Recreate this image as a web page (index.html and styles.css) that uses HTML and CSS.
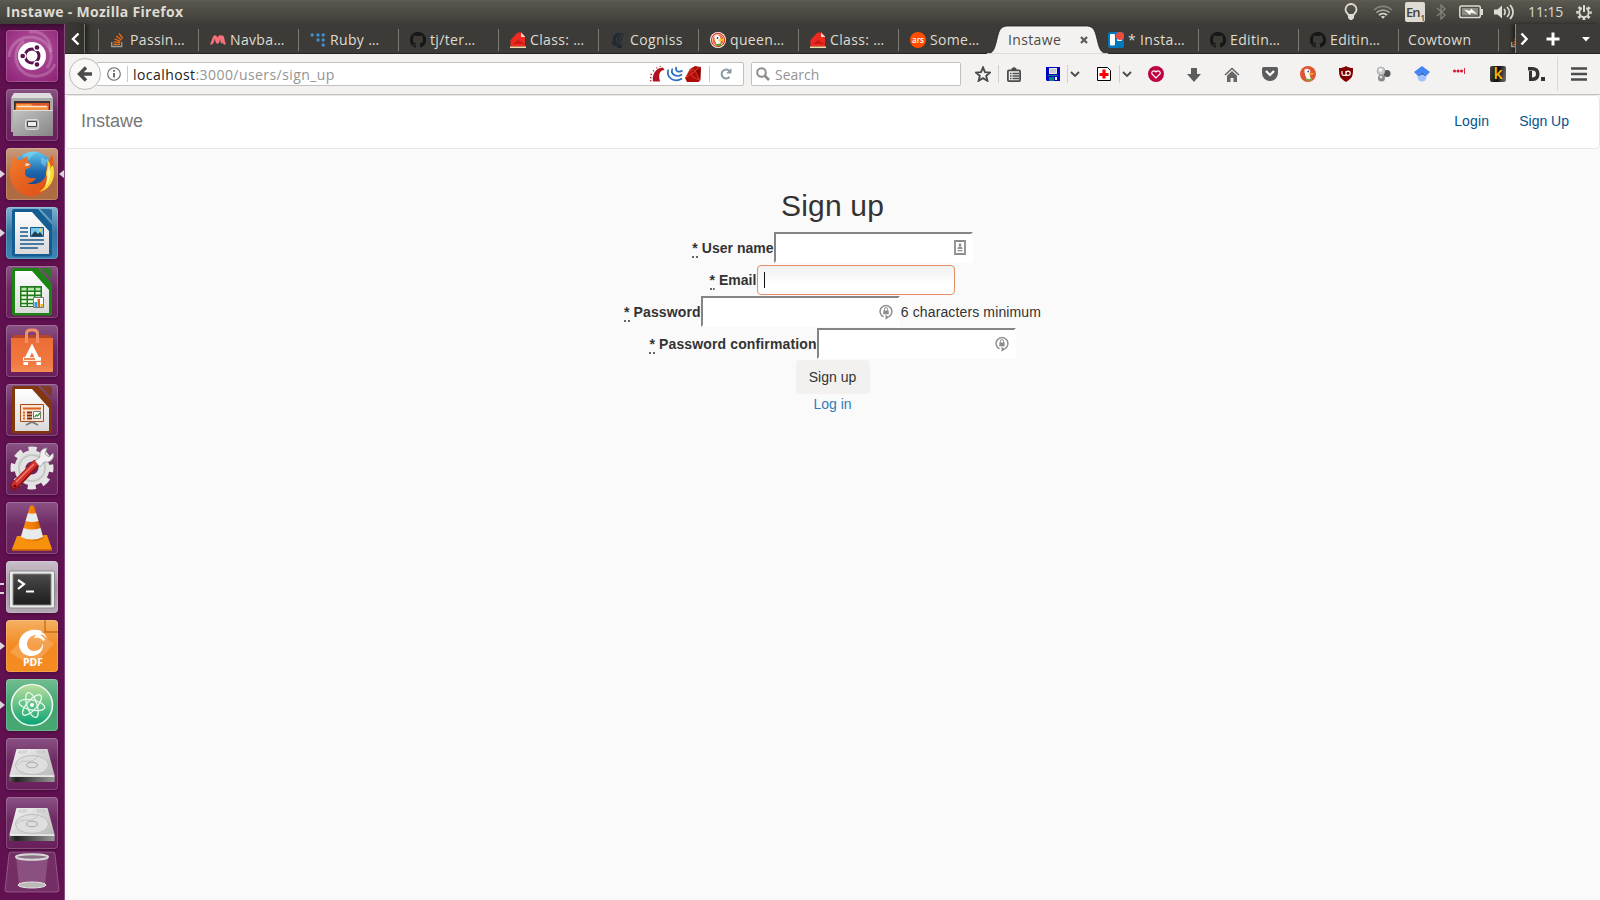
FILE: index.html
```html
<!DOCTYPE html>
<html lang="en">
<head>
<meta charset="utf-8">
<title>Instawe</title>
<link rel="stylesheet" href="styles.css">
</head>
<body>
<svg class="defs" width="0" height="0" aria-hidden="true">
  <defs>
    <linearGradient id="metal" x1="0" y1="0" x2="1" y2="1"><stop offset="0" stop-color="#f4f4f4"/><stop offset="1" stop-color="#b4b4b4"/></linearGradient>
    <linearGradient id="cabinet" x1="0" y1="0" x2="1" y2="1"><stop offset="0" stop-color="#c4c4c4"/><stop offset="1" stop-color="#858585"/></linearGradient>
    <linearGradient id="paper" x1="0" y1="0" x2="0" y2="1"><stop offset="0" stop-color="#fff"/><stop offset="1" stop-color="#d9d9d9"/></linearGradient>
    <linearGradient id="bag" x1="0" y1="0" x2="0" y2="1"><stop offset="0" stop-color="#ec6c34"/><stop offset=".75" stop-color="#f07a41"/><stop offset="1" stop-color="#f58a55"/></linearGradient>
    <linearGradient id="fox" x1="0" y1="0" x2="1" y2="1"><stop offset="0" stop-color="#f2802c"/><stop offset=".5" stop-color="#e4601f"/><stop offset=".8" stop-color="#e2551a"/><stop offset="1" stop-color="#f6a821"/></linearGradient>
    <linearGradient id="globe" x1="0" y1="0" x2="0" y2="1"><stop offset="0" stop-color="#62c6ee"/><stop offset=".5" stop-color="#1c66ae"/><stop offset="1" stop-color="#123e80"/></linearGradient>
    <linearGradient id="term" x1="0" y1="0" x2="0" y2="1"><stop offset="0" stop-color="#4a4a4a"/><stop offset="1" stop-color="#1d1d1d"/></linearGradient>
    <linearGradient id="cone" x1="0" y1="0" x2="1" y2="0"><stop offset="0" stop-color="#f79318"/><stop offset=".5" stop-color="#f57f06"/><stop offset="1" stop-color="#d25a00"/></linearGradient>
    <linearGradient id="atom" x1="0" y1="0" x2="0" y2="1"><stop offset="0" stop-color="#b9de9b"/><stop offset="1" stop-color="#08a374"/></linearGradient>
    <linearGradient id="slab" x1="0" y1="0" x2="1" y2="0"><stop offset="0" stop-color="#555"/><stop offset=".15" stop-color="#222"/><stop offset="1" stop-color="#999"/></linearGradient>
    <symbol id="i-github" viewBox="0 0 16 16"><path fill="#161616" fill-rule="evenodd" d="M8 0a8 8 0 0 0-2.600 15.600c.4.1.6-.2.6-.4v-1.500c-2.200.5-2.700-1-2.700-1-.4-.9-.9-1.100-.9-1.100-.7-.5.1-.5.1-.5.8.1 1.200.8 1.200.8.7 1.200 1.900.9 2.300.7.1-.5.3-.9.5-1.100-1.800-.2-3.600-.9-3.600-4 0-.9.3-1.600.8-2.100-.1-.2-.4-1 .1-2.100 0 0 .7-.2 2.200.8a7.600 7.600 0 0 1 4 0c1.500-1 2.200-.8 2.200-.8.4 1.100.2 1.900.1 2.100.5.6.8 1.300.8 2.100 0 3.100-1.900 3.800-3.700 4 .3.3.6.8.6 1.500v2.200c0 .2.100.5.600.4A8 8 0 0 0 8 0z"/></symbol>
    <symbol id="i-ruby" viewBox="0 0 16 16"><path fill="#ee2a20" d="M.5 8 7.500.5h4L15 5v9.500H.5z"/><path fill="#c91b16" d="m3 12 5-4 7 4z"/><path fill="#fbd5cf" d="M11 .5 15.500 5H11z"/><path fill="#f3d9a5" d="M0 14.500h16V16H0z"/></symbol>
    <symbol id="i-duck" viewBox="0 0 16 16"><circle cx="8" cy="8" r="8" fill="#de5833"/><path fill="#fff" d="M4.500 3.500C6 2 10 2.500 10.500 5.500L9.500 8l1.500 6H7C6 11 4 7 4.500 3.500z"/><path fill="#fdc70a" d="m9 7.500 4.500-.5c1 .5-.5 1.500-4 2z"/><circle cx="8.300" cy="5.500" r=".9" fill="#2a4f8f"/><path fill="#62bb47" d="m6 12.500 4 .5 2-1v3l-2.500-.8L7 15z"/></symbol>
    <symbol id="i-so" viewBox="0 0 16 16"><path d="M1.700 10v4.500h10V10" fill="none" stroke="#9a9a98" stroke-width="1.300"/><path d="M3.500 12.300h6.500M3.700 9.800l6.400.9M4.500 7l6 2.300M6.300 4l5.200 4M9 1.300l3.700 5.200" stroke="#f06f10" stroke-width="1.300"/></symbol>
    <symbol id="i-chev" viewBox="0 0 10 6"><path d="m1 1 4 4 4-4" fill="none" stroke="#4b4b4b" stroke-width="1.800"/></symbol>
    <symbol id="i-lock" viewBox="0 0 14 16"><path d="M4.500 12.800A5.900 5.900 0 1 1 9.500 12.800" fill="none" stroke="#8d8d8d" stroke-width="1.500"/><path d="m6.500 10.800 3.700 2.400-3.700 2.600z" fill="#8d8d8d"/><path d="M4.300 6.500h5.400v3.800H4.300z" fill="#8d8d8d"/><path d="M5.400 7V5.200a1.600 1.600 0 0 1 3.200 0V7" fill="none" stroke="#8d8d8d"/></symbol>
    <symbol id="i-disk" viewBox="0 0 52 52"><path d="M10.500 11h31L48.500 37l-.5 7H4l-.5-7z" fill="url(#metal)"/><path d="M3.500 38.500h45V44h-45z" fill="url(#slab)"/><path d="M4 38.200h44.300" stroke="#fff" stroke-width="1.200"/><ellipse cx="26" cy="27" rx="16.500" ry="9.500" fill="#dedede" stroke="#bdbdbd"/><path d="M11 27c7-9 13 2 21-9" stroke="#c4c4c4" fill="none"/><ellipse cx="26" cy="27" rx="5.500" ry="2.800" fill="#ddd" stroke="#aaa"/><path d="M13 13h8l-2 2h-6zM31 13h8v2h-7z" fill="none" stroke="#bbb" stroke-width=".7"/></symbol>
    <symbol id="i-doc" viewBox="0 0 52 52"><path d="M8 2h24l14 16v29a2.500 2.500 0 0 1-2.500 2.500h-35A2.500 2.500 0 0 1 6 47V4a2 2 0 0 1 2-2z" fill="currentColor"/><path d="M34 2h10a2 2 0 0 1 2 2v10z" fill="currentColor" opacity=".8"/><path d="M9 5h17l17 19v23H9z" fill="url(#paper)"/></symbol>
  </defs>
</svg>

<header class="panel">
  <div class="panel-title">Instawe - Mozilla Firefox</div>
  <div class="indicators">
    <svg class="ind-bulb" width="16" height="18" viewBox="0 0 16 18"><path d="M5.500 12C5 10 2.500 9.500 2.500 6.500a5.500 5.500 0 0 1 11 0c0 3-2.500 3.500-3 5.500z" fill="none" stroke="#dfdbd2" stroke-width="1.800"/><path d="M5 12.500h6V15l-2 2H7l-2-2z" fill="#dfdbd2"/></svg>
    <svg class="ind-wifi" width="20" height="14" viewBox="0 0 20 14"><g fill="none" stroke-width="1.700"><path d="M1 5a13 13 0 0 1 18 0" stroke="#85827b"/><path d="M3.500 7.700a9.500 9.500 0 0 1 13 0" stroke="#a5a29b"/><path d="M6 10.200a6 6 0 0 1 8 0" stroke="#dfdbd2"/></g><path d="m7.800 11.600 2.200 2.200 2.200-2.200a4 4 0 0 0-4.400 0z" fill="#dfdbd2"/></svg>
    <div class="ind-lang">En<sub>1</sub></div>
    <svg class="ind-bt" width="10" height="16" viewBox="0 0 10 16"><path d="m1 4 8 7-4 4V1l4 4-8 7" fill="none" stroke="#85827b" stroke-width="1.300"/></svg>
    <svg class="ind-bat" width="24" height="14" viewBox="0 0 24 14"><rect x=".8" y="1" width="20.500" height="11.500" rx="1.800" fill="none" stroke="#dfdbd2" stroke-width="1.500"/><path d="M22 4h2v6h-2z" fill="#dfdbd2"/><path d="M3 3h16v7.500H3z" fill="#8f8b84"/><path d="m5 4.500 6 1.500L12 3.500l6 5.500-6-1.500-1 2.500z" fill="#fff"/></svg>
    <svg class="ind-vol" width="20" height="16" viewBox="0 0 20 16"><path d="M0 5.500h3.500L8 1.500v13l-4.500-4H0z" fill="#dfdbd2"/><path d="M10 5c1.500 1.500 1.500 4.500 0 6M13 3c3 3 3 7 0 10M16 1c4 4 4 10 0 14" fill="none" stroke="#dfdbd2" stroke-width="1.700"/></svg>
    <div class="ind-time">11:15</div>
    <svg class="ind-gear" width="16" height="16" viewBox="0 0 16 16"><circle cx="8" cy="8.500" r="4.700" fill="none" stroke="#dfdbd2" stroke-width="1.900"/><circle cx="8" cy="8.500" r="6.600" fill="none" stroke="#dfdbd2" stroke-width="2.400" stroke-dasharray="2.600 2.584" stroke-dashoffset="1.300"/><path d="M6 0h4v8H6z" fill="#4d4b46"/><path d="M8 1v7" stroke="#dfdbd2" stroke-width="2"/></svg>
  </div>
</header>

<div class="desktop">
  <aside class="launcher">
    <div class="tile dash"><svg viewBox="0 0 52 52"><g fill="none" stroke="#fff" stroke-opacity=".2" stroke-width="3"><path d="M3 27C4 12 18 3 34 9c12 6 14 20 7 29"/><path d="M49 34c-5 13-25 17-35 5-7-9-5-22 4-28"/><path d="M23 2c14-2 22 8 22 20"/></g><circle cx="26" cy="26" r="14" fill="#fff"/><circle cx="26" cy="26" r="7" fill="none" stroke="#5e1150" stroke-width="3"/><g stroke="#fff" stroke-width="1.300" fill="#5e1150"><circle cx="16.700" cy="26" r="3"/><circle cx="31" cy="17.500" r="3"/><circle cx="31" cy="34.500" r="3"/></g></svg></div>
    <div class="tile"><svg viewBox="0 0 52 52"><path d="M8 4h36l3 6v33H5V10z" fill="#ababab"/><path d="M8 4h36l3 5H5z" fill="#ddd"/><path d="M8 12h36v10H8z" fill="#3d3231"/><path d="M10 14h33v8H9z" fill="#d9572a"/><path d="M10 15h15l2 2h15v5H10z" fill="#f4913f"/><path d="M11 17.500h30" stroke="#ffe3c7" stroke-width="1.500"/><path d="M7 21h40v26H7z" fill="url(#cabinet)"/><path d="M7 21.500h40" stroke="#ddd"/><rect x="19.500" y="30.500" width="13" height="10" rx="2" fill="#b9b9b9" stroke="#ddd"/><path d="M21.500 32.500h9v5h-9z" fill="#eee" stroke="#444"/></svg></div>
    <div class="tile firefox running focused"><svg viewBox="0 0 52 52"><circle cx="27" cy="24" r="20.500" fill="url(#globe)"/><path d="M17 7c5-3 10-4 14-3-3 3-7 5-8 8l-5 1zM35 9l6 3-2 7-4-4z" fill="#8fe0f6" opacity=".45"/><path d="M8 8c2 2.500 4 4.500 7 4 2-2 4-3 7-3.500-.5 3 0 5 1.500 6.500l1.500 2c0 3-4 3.500-6 5 .5 2-.5 4 1 6 3 3 6 1.500 10 2-2 4-6 5-9 5.500 9 2 17-1 19-9 1-5 0-8 1-11 3-4 4-6 5-9 3 9 2 19-1 26C41 43 34 48 25.500 48 13 48 4 38 4 26 4 19 5 13 8 8z" fill="url(#fox)"/><path d="M41 10.500c3 5 4 7 3.500 9.500L47 17c2 8 1 15-3 20-3 4-7 6-11 7 6-4 8-8 8-14 0-2-1-3-1-5 2-5 2-9 1-14.500z" fill="#fbd932"/><path d="m42 17 1.500 7 1-3c0 8-1 13-5 17 2-6 2-14 2.500-21z" fill="#fff4a0"/><path d="m20 15 4 1c-1 2-3 2-5 2z" fill="#fbd9c4"/></svg></div>
    <div class="tile writer running"><svg class="c-writer" viewBox="0 0 52 52"><use href="#i-doc"/><path d="M14 21h8M14 25h8M14 29h8M14 33h24M14 37h24M14 41h18" stroke="#155a8c" stroke-width="1.700"/><path d="M24.500 20.500h13v9h-13z" fill="#79c8ed" stroke="#155a8c"/><path d="m25 29 4-5 3 3 2-2 3 4z" fill="#23404e"/><circle cx="34.500" cy="23" r="1.500" fill="#f4cf3e"/></svg></div>
    <div class="tile"><svg class="c-calc" viewBox="0 0 52 52"><use href="#i-doc"/><path d="M14 20h22v21H14z" fill="#207a1c"/><path d="M15.500 21.800h5v2.600h-5zm6.500 0h6v2.600h-6zm7.500 0h5v2.600h-5z" fill="#b8e5a8"/><path d="M15.500 26h5v2.500h-5zm6.500 0h6v2.500h-6zm7.500 0h5v2.500h-5zm-14 4.200h5v2.500h-5zm6.500 0h6v2.500h-6zm7.500 0h5v2.500h-5zm-14 4.100h5v2.500h-5zm6.500 0h6v2.500h-6zm-6.500 4h5v1.700h-5zm6.500 0h6v1.700h-6z" fill="#eafbe2"/><path d="M27.500 31.500h10v10h-10z" fill="#fff" stroke="#777"/><path d="M28.500 36h2.500v5h-2.500z" fill="#269be0"/><path d="M31.500 33H34v8h-2.500z" fill="#d9661f"/><path d="M34.500 38H37v3h-2.500z" fill="#f0b91a"/></svg></div>
    <div class="tile"><svg viewBox="0 0 52 52"><path d="M5 14 8 10h36l3 4z" fill="#b4472a"/><path d="M5 13h42v34H5z" fill="url(#bag)"/><path d="M20.500 18V9q0-4 4-4h3q4 0 4 4v9" fill="none" stroke="#f0906b" stroke-width="3"/><path d="m20 35 6-12 6 12" fill="none" stroke="#fff" stroke-width="4"/><path d="M17 34h18" stroke="#fff" stroke-width="3.600"/><path d="M18 34h11" stroke="#ed6b2c" stroke-width="1.600"/><path d="M17.500 38.500h4.500M30.500 38.500H35" stroke="#fff" stroke-width="3"/></svg></div>
    <div class="tile"><svg class="c-impress" viewBox="0 0 52 52"><use href="#i-doc"/><path d="M14.500 20.500h23v17h-23z" fill="#fbe4d6" stroke="#a14d19"/><path d="M17 24.500h18" stroke="#d9661f" stroke-width="2"/><path d="M17 28.500h2M17 31.500h2M17 34.500h2" stroke="#d9661f" stroke-width="2"/><path d="M21 28.500h5M21 31.500h5M21 34.500h5" stroke="#7d2f0c" stroke-width="2"/><path d="M27.500 27.500h7v7h-7z" fill="#fff" stroke="#777"/><path d="m28.500 33 2-2 1 1 2.500-3" stroke="#2e9d34" stroke-width="1.300" fill="none"/><path d="m20 41 6-3 6 3" fill="none" stroke="#777" stroke-width="1.600"/></svg></div>
    <div class="tile"><svg viewBox="0 0 52 52"><circle cx="26" cy="25" r="18.500" fill="none" stroke="#e5e5e5" stroke-width="6" stroke-dasharray="8 6.530" stroke-dashoffset="4"/><circle cx="26" cy="25" r="12" fill="none" stroke="#e2e2e2" stroke-width="11"/><circle cx="26" cy="25" r="13" fill="none" stroke="#c6c6c6" stroke-width="2"/><path d="m8.500 43 21-22" stroke="#8f1414" stroke-width="8" stroke-linecap="round"/><path d="m8.500 42 21-22" stroke="#d5322d" stroke-width="5.500" stroke-linecap="round"/><path d="m10 39 18-18" stroke="#f0837b" stroke-width="1.200"/><circle cx="9" cy="43" r="1.500" fill="#601"/><path d="m29 18 5-4c-1-5 2-9 7-9l-2 6 4 3 4-4c2 6-3 10-9 9l-4 5z" fill="#f1f1f1" stroke="#999" stroke-width=".8"/></svg></div>
    <div class="tile"><svg viewBox="0 0 52 52"><path d="m11 34 30-1 5 14H6z" fill="#f8920d"/><path d="M6 47h40v1.800H6z" fill="#d76a00"/><path d="M24 4q2-1.500 4 0l9.500 32q-11 7-23 0z" fill="url(#cone)"/><path d="m22 11-2.500 8q6.500 2 13 0L30 11q-4 1.500-8 0zM17.500 26l-2.500 9q11 5 22 0l-2.500-9q-8.500 3-17 0z" fill="#e6ebec"/></svg></div>
    <div class="tile terminal running double"><svg viewBox="0 0 52 52"><rect x="3.500" y="10" width="45" height="37" rx="1.500" fill="#ebebeb" stroke="#8a8a8a"/><path d="M7 13h38v31H7z" fill="url(#term)" stroke="#888"/><path d="m12 19 6 4-6 5" fill="none" stroke="#fff" stroke-width="2.200"/><path d="M20 30.500h8" stroke="#fff" stroke-width="2"/></svg></div>
    <div class="tile pdf running"><svg viewBox="0 0 52 52"><path d="M26 8 48 24 26 47 4 32z" fill="#fff" opacity=".18"/><path d="M39 0v12h13" fill="none" stroke="#c86d15" stroke-width="1.300"/><path d="M36 11C26 7 13 12 13 24c0 7 5 12 12 12 8 0 13-6 12-13-1 4-3 8-9 8-4 0-7-3-7-7 0-5 4-9 9-9l-2 3c4-1 8 0 9 3l2-1c-1-3-4-5-6-5 5-1 6 2 8 4-1-4-3-6-6-7z" fill="#fff"/><text x="27" y="46" class="pdf-label">PDF</text></svg></div>
    <div class="tile atom running"><svg viewBox="0 0 52 52"><circle cx="26" cy="26" r="20.500" fill="url(#atom)" stroke="#e9f4ec" stroke-width="1.700"/><g fill="none" stroke="#e9f9ee" stroke-width="1.300"><ellipse cx="26" cy="26" rx="13" ry="5" transform="rotate(12 26 26)"/><ellipse cx="26" cy="26" rx="13" ry="5" transform="rotate(72 26 26)"/><ellipse cx="26" cy="26" rx="13" ry="5" transform="rotate(132 26 26)"/></g><circle cx="26" cy="26" r="2" fill="#fff"/></svg></div>
    <div class="tile"><svg viewBox="0 0 52 52"><use href="#i-disk"/></svg></div>
    <div class="tile"><svg viewBox="0 0 52 52"><use href="#i-disk"/></svg></div>
    <svg class="trash" width="56" height="42" viewBox="0 0 56 42"><path d="M7 1h42q2 0 2 2l4 36q0 2-2 2H3q-2 0-2-2L5 3q0-2 2-2z" fill="#fff" fill-opacity=".12" stroke="#fff" stroke-opacity=".25"/><path d="M12 6h32l-3 28H15z" fill="#fff" fill-opacity=".17"/><ellipse cx="28" cy="34" rx="14" ry="3" fill="#bcb9b6" stroke="#e6e6e6"/><ellipse cx="28" cy="6" rx="16" ry="2.700" fill="#8b7286" stroke="#d8d8d8" stroke-width="2"/></svg>
  </aside>

  <main class="window">
    <nav class="tabs">
      <div class="scroll-left"><svg width="9" height="14" viewBox="0 0 9 14"><path d="M7.500 1.500 2 7l5.500 5.500" fill="none" stroke="#fff" stroke-width="2.400"/></svg></div>
      <div class="tab"><svg class="fav" viewBox="0 0 16 16"><use href="#i-so"/></svg><span>Passin…</span></div>
      <div class="tab"><svg class="fav" viewBox="0 0 16 16"><path d="M.5 11.500c3 .5 2.500-7 4.500-7s1 6 2.500 6S8 4.500 10 4.500s1 6 2.300 6M11.500 4.500c3 0 .5 7 4 7" fill="none" stroke="#f7727c" stroke-width="2.600"/></svg><span>Navba…</span></div>
      <div class="tab"><svg class="fav" viewBox="0 0 16 16"><g fill="#3f8fd0"><circle cx="2.200" cy="3" r="1.700"/><circle cx="8" cy="3" r="1.700"/><circle cx="13.200" cy="3" r="1.700"/><circle cx="8" cy="8" r="1.700"/><circle cx="13.200" cy="8" r="1.700"/><circle cx="13.200" cy="13" r="1.700"/></g></svg><span>Ruby …</span></div>
      <div class="tab"><svg class="fav"><use href="#i-github"/></svg><span>tj/ter…</span></div>
      <div class="tab"><svg class="fav"><use href="#i-ruby"/></svg><span>Class: …</span></div>
      <div class="tab"><svg class="fav" viewBox="0 0 16 16"><path d="M14 2C7-1 2 3 3 8l-2 3 2 .5V14l4-.5V16h5l-1-5" fill="#1f2a33"/><path d="M14 4a4.500 4.500 0 1 0 0 7M13 6a2 2 0 1 0 0 3" fill="none" stroke="#3e3d39" stroke-width="1.200"/></svg><span>Cogniss</span></div>
      <div class="tab"><svg class="fav" viewBox="0 0 16 16"><circle cx="8" cy="8" r="8" fill="#fff"/><circle cx="8" cy="8" r="7.200" fill="#de3b12"/><circle cx="8" cy="8" r="6" fill="#fff"/><circle cx="8" cy="8" r="5.500" fill="#e8643a"/><path fill="#fff" d="M4.500 4C6 2 10 3 10.500 6v7H7C6 11 4 7 4.500 4z"/><path fill="#fdc70a" d="m9 7 4.500 0-1 2-4 .5z"/><circle cx="7.500" cy="6" r=".9" fill="#234"/><path fill="#48a535" d="m6 12 5-.5v2.500H7z"/></svg><span>queen…</span></div>
      <div class="tab"><svg class="fav"><use href="#i-ruby"/></svg><span>Class: …</span></div>
      <div class="tab"><i class="ars">ars</i><span>Some…</span></div>
      <div class="tab active"><svg class="tab-shape" width="128" height="30" viewBox="0 0 128 30"><path d="M1 30c7 0 9-3 11-11l2-8C16 4 18 2 25 2h76c7 0 9 2 11 9l2 8c2 8 4 11 13 11z" fill="#f4f2f0" stroke="#23221f" stroke-width=".8"/><path d="M3 29.300h121v1H3z" fill="#f4f2f0"/></svg><span>Instawe</span><svg class="close" width="8" height="8" viewBox="0 0 8 8"><path d="m1 1 6 6M7 1 1 7" stroke="#5c5c5a" stroke-width="2.300"/></svg></div>
      <div class="tab after"><svg class="fav" viewBox="0 0 16 16"><rect width="16" height="16" rx="2.500" fill="#0079bf"/><rect x="2" y="2" width="5" height="11.500" rx="1" fill="#fff"/><rect x="9" y="2" width="5" height="7" rx="1" fill="#fff"/><circle cx="12" cy="4" r="4" fill="#eb4d3d"/></svg><span>* Insta…</span></div>
      <div class="tab"><svg class="fav"><use href="#i-github"/></svg><span>Editin…</span></div>
      <div class="tab"><svg class="fav"><use href="#i-github"/></svg><span>Editin…</span></div>
      <div class="tab bare"><span>Cowtown</span></div>
      <div class="tab cut"><svg class="fav" viewBox="0 0 16 16"><use href="#i-so"/></svg></div>
      <div class="tab-tools">
        <svg width="8" height="14" viewBox="0 0 8 14"><path d="M1.500 1.500 6.500 7l-5 5.500" fill="none" stroke="#fff" stroke-width="2.400"/></svg>
        <svg class="plus" width="14" height="14" viewBox="0 0 14 14"><path d="M7 .5v13M.5 7h13" stroke="#fff" stroke-width="3"/></svg>
        <svg width="8" height="5" viewBox="0 0 8 5"><path d="M0 0h8L4 4.500z" fill="#fff"/></svg>
      </div>
    </nav>

    <div class="toolbar">
      <div class="back"><svg width="16" height="16" viewBox="0 0 16 16"><path d="M9 1.500 2.500 8 9 14.500M3 8h12" fill="none" stroke="#4b4b4b" stroke-width="3.400"/></svg></div>
      <div class="urlbar">
        <svg width="14" height="14" viewBox="0 0 14 14"><circle cx="7" cy="7" r="6.300" fill="none" stroke="#666" stroke-width="1.100"/><path d="M7 6v4.500M7 3v1.800" stroke="#555" stroke-width="1.700"/></svg>
        <div class="url"><b>localhost</b>:3000/users/sign_up</div>
        <div class="url-icons">
          <svg width="16" height="16" viewBox="0 0 16 16"><path d="M4 15.500C3 8 6.500 2 14 1.500l1.500 2.500C11 4 9 8 11 15.500z" fill="#b11020"/><path d="m1 15 1.500-.5M1 11.500l1.500.3M1.500 8l1.500.7M4 4.300l1 1M7.500 1.500l.7 1M11 0l.3 1" stroke="#b11020" stroke-width="1.200"/></svg>
          <svg width="16" height="16" viewBox="0 0 16 16"><g fill="none" stroke="#2a6fc0" stroke-width="1.700"><path d="M1.500 3.500c-3 8 6 14 13.500 9"/><path d="M5.500 2.500c-2.500 6 4 9.500 9.500 6"/><path d="M9.500 1c-2 4 2 6 6 3.500"/></g></svg>
          <svg width="16" height="16" viewBox="0 0 16 16"><path d="m5 3 5-3 6 1-.5 13-2 2H2l-2-4z" fill="#b10d08"/><path d="m5 3.500 5.500 1L15 1M5 3.500l-4 8L10.500 5l4 9-7-3z" fill="none" stroke="#e04a3d" stroke-width=".7"/><path d="m11 5 4.500-3-.5 11z" fill="#7d0703"/></svg>
        </div>
        <svg class="reload" width="12" height="12" viewBox="0 0 12 12"><path d="M9.500 9A4.500 4.500 0 1 1 9.500 3" fill="none" stroke="#8c9aa5" stroke-width="2"/><path d="M11.500 0v5.500H6z" fill="#8c9aa5"/></svg>
      </div>
      <div class="search"><svg width="14" height="14" viewBox="0 0 14 14"><circle cx="5.500" cy="5.500" r="4.300" fill="none" stroke="#8c8c8a" stroke-width="2"/><path d="m8.500 8.500 4.500 4.500" stroke="#8c8c8a" stroke-width="2.600"/></svg><span>Search</span></div>
      <div class="cell star"><svg width="16" height="16" viewBox="0 0 16 16"><path d="m8 1.500 2 4.600 5 .5-3.800 3.300 1.200 4.900L8 12.200l-4.400 2.600 1.200-4.900L1 6.600l5-.5z" fill="none" stroke="#4b4b4b" stroke-width="1.900"/></svg></div>
      <div class="cell list"><svg width="14" height="15" viewBox="0 0 14 15"><path d="M4.500 1.500 7 0l2.500 1.500V4h-5z" fill="#4b4b4b"/><rect x=".9" y="3.400" width="12.200" height="10.700" rx="1" fill="#f4f2f0" stroke="#4b4b4b" stroke-width="1.800"/><path d="M3 6.500h1.500M3 9h1.500M3 11.500h1.500M5.500 6.500H12M5.500 9H12M5.500 11.500H12" stroke="#4b4b4b" stroke-width="1.300"/></svg></div>
      <div class="cell save"><svg width="14" height="14" viewBox="0 0 14 14"><path d="M0 0h14v14H1l-1-1z" fill="#0000c0"/><path d="M3 1h8v6H3z" fill="#e9e9e9"/><path d="M4 3h6M4 5h6" stroke="#aaa"/><path d="M2 8h10v1H2zM3 10h5v4H3z" fill="#078080"/><path d="M9 10h2v3H9z" fill="#fff"/></svg></div>
      <div class="drop"><svg width="10" height="6"><use href="#i-chev"/></svg></div>
      <div class="cell cross"><svg width="14" height="14" viewBox="0 0 14 14"><path d="M.5.500h10l3 3v10H.5z" fill="#fff" stroke="#000"/><path d="M7 2.500v9M2.500 7.500h9" stroke="#f00" stroke-width="3.200"/></svg></div>
      <div class="drop"><svg width="10" height="6"><use href="#i-chev"/></svg></div>
      <div class="addons">
        <div><svg width="16" height="16" viewBox="0 0 16 16"><circle cx="8" cy="8" r="8" fill="#be0243"/><path d="M8 12 4.200 8.200C2.500 5.500 6.200 3.500 8 6c1.800-2.500 5.500-.5 3.800 2.200z" fill="none" stroke="#fff" stroke-width="1.200"/></svg></div>
        <div><svg width="14" height="15" viewBox="0 0 14 15"><path d="M4 1h6v6h4l-7 8-7-8h4z" fill="#5d5d5d"/></svg></div>
        <div><svg width="16" height="15" viewBox="0 0 16 15"><path d="m1 8 7-6.500L15 8" fill="none" stroke="#666" stroke-width="1.600"/><path d="m3 8.700 5-4.600 5 4.600V15H9.500v-4h-3v4H3z" fill="#666"/></svg></div>
        <div><svg width="16" height="14" viewBox="0 0 16 14"><path d="M1.500 0h13Q16 0 16 1.500V6A8 8 0 0 1 0 6V1.500Q0 0 1.500 0z" fill="#5d5d5d"/><path d="m4 4 4 4 4-4" fill="none" stroke="#fff" stroke-width="2.200"/></svg></div>
        <div><svg width="16" height="16"><use href="#i-duck"/></svg></div>
        <div><svg width="16" height="16" viewBox="0 0 16 16"><path d="M8 0c2 1.500 4.500 2 7 2 0 7 0 10-7 14C1 12 1 9 1 2c2.500 0 5-.5 7-2z" fill="#800000"/><path d="M4 5v2.500Q4 9.300 5.500 9.300H8V5M8 7.200a2.100 2.100 0 1 0 4.200 0a2.100 2.100 0 1 0-4.200 0" fill="none" stroke="#fff" stroke-width="1.200"/></svg></div>
        <div><svg width="16" height="16" viewBox="0 0 16 16"><circle cx="11" cy="7.500" r="3.500" fill="#555"/><circle cx="5" cy="5" r="4" fill="#c8c8c8" stroke="#999" stroke-width=".6"/><circle cx="5.500" cy="12" r="3.500" fill="#888"/><circle cx="4.500" cy="4" r="1.800" fill="#f6f6f6"/><circle cx="5" cy="11" r="1.500" fill="#ddd"/></svg></div>
        <div><svg width="16" height="16" viewBox="0 0 16 16"><path d="m8 0 8 6-4 4H4L0 6z" fill="#4285f4"/><circle cx="8" cy="11" r="4.500" fill="#a0c3ff"/><path d="m3.500 9 1.500 1c2-2 4-2 6 0l1.500-1L8 6z" fill="#356ac3"/></svg></div>
        <div class="lp"><svg width="12" height="6" viewBox="0 0 12 6"><circle cx="1.500" cy="3" r="1.500" fill="#d9102f"/><circle cx="5" cy="3" r="1.500" fill="#d9102f"/><circle cx="8.500" cy="3" r="1.500" fill="#d9102f"/><path d="M11.500 0v6" stroke="#d9102f" stroke-width=".9"/></svg></div>
        <div><span class="k">k</span></div>
        <div><svg width="17" height="14" viewBox="0 0 17 14"><path d="M0 0h5q6.500.5 6.500 7T5 14H1V4h3v6.500Q8 10.500 8 7T5 3.500H0z" fill="#333"/><path d="M13 10h4v4h-4z" fill="#333"/></svg></div>
      </div>
      <div class="menu"><svg width="16" height="14" viewBox="0 0 16 14"><path d="M0 1.500h16M0 7h16M0 12.500h16" stroke="#4b4b4b" stroke-width="2.600"/></svg></div>
    </div>

    <section class="page">
      <nav class="navbar"><a class="brand">Instawe</a><a class="login">Login</a><a>Sign Up</a></nav>
      <h2>Sign up</h2>
      <form class="form">
        <div class="row"><label><abbr title="required">*</abbr> User name</label><div class="field"><svg width="12" height="15" viewBox="0 0 12 15"><path d="M1 1h10v13H1z" fill="none" stroke="#8d8d8d" stroke-width="1.800"/><circle cx="6" cy="5" r="1.400" fill="#8d8d8d"/><path d="M3.500 9q0-2.500 2.500-2.500T8.500 9zM3.500 10h5v1.300h-5z" fill="#8d8d8d"/></svg></div></div>
        <div class="row"><label><abbr title="required">*</abbr> Email</label><div class="field focus"><i class="caret"></i></div></div>
        <div class="row"><label class="loose"><abbr title="required">*</abbr> Password</label><div class="field"><svg width="14" height="16"><use href="#i-lock"/></svg></div><span class="hint">6 characters minimum</span></div>
        <div class="row"><label class="loose"><abbr title="required">*</abbr> Password confirmation</label><div class="field"><svg width="14" height="16"><use href="#i-lock"/></svg></div></div>
        <button type="button">Sign up</button>
        <a class="log-in">Log in</a>
      </form>
    </section>
  </main>
</div>
</body>
</html>
```
FILE: styles.css
```css
* { box-sizing: border-box; }
body { margin: 0; width: 1600px; height: 900px; overflow: hidden; display: flex; flex-direction: column; font-family: "Open Sans", "Noto Sans", sans-serif; font-size: 14px; }
svg { display: block; flex: none; }
.defs { position: absolute; }

/* Top panel */
.panel { height: 24px; flex: none; display: flex; justify-content: space-between; align-items: center; padding: 0 8px 0 6px; color: #dfdbd2; background: linear-gradient(#5f5d50, #57554c 10%, #3e3d39); }
.panel-title { font-weight: 700; font-size: 14px; letter-spacing: .31px; line-height: 24px; }
.indicators { display: flex; align-items: center; }
.ind-bulb { margin-right: 14px; }
.ind-wifi { margin-right: 12px; }
.ind-lang { width: 20px; height: 20px; border-radius: 2px; background: #dfdbd2; color: #45433f; font-size: 13px; font-weight: 600; line-height: 20px; padding-left: 1px; margin-right: 11px; letter-spacing: -1px; white-space: nowrap; }
.ind-lang sub { font-size: 8px; line-height: 0; margin-left: 1px; }
.ind-bt { margin-right: 13px; }
.ind-bat { margin-right: 11px; }
.ind-vol { margin-right: 14px; }
.ind-time { width: 35px; margin-right: 13px; letter-spacing: -.1px; line-height: 20px; padding-bottom: 1px; white-space: nowrap; }

.desktop { flex: 1; display: flex; min-height: 0; }

/* Launcher */
.launcher { width: 65px; flex: none; padding: 6px 0 0 6px; background: linear-gradient(#3c0d33, #60104f 8px, #611150); border-right: 1px solid #8a4a7c; display: flex; flex-direction: column; gap: 7px; }
.tile { position: relative; width: 52px; height: 52px; flex: none; border-radius: 4px; background: linear-gradient(#8a5284, #6d2a62 45%, #6a1f5c); box-shadow: inset 0 0 0 1px #ffffff30, 0 1px 3px #2a052a90; }
.tile svg { width: 52px; height: 52px; }
.dash { background: radial-gradient(circle at 50% 40%, #b65aa0, #8c1f76); }
.firefox { background: linear-gradient(#c99a7d, #ad6a44 60%, #b06c42); }
.writer { background: linear-gradient(#82b3d2, #3577a4 50%, #3a85b5); }
.terminal { background: linear-gradient(#c9bfca, #a396a4 50%, #b3a9b4); }
.pdf { background: linear-gradient(#f4b063, #f38a22 50%, #f58b20); }
.atom { background: linear-gradient(#72bd92, #40a36d 50%, #48a874); }
.c-writer { color: #135d92; }
.c-calc { color: #1c8414; }
.c-impress { color: #81380e; }
.running::before { content: ""; position: absolute; left: -6px; top: 22px; border: 4px solid transparent; border-left: 5px solid #ddd3da; border-right: 0; }
.focused::after { content: ""; position: absolute; left: 53px; top: 22px; border: 4px solid transparent; border-right: 5px solid #ddd3da; border-left: 0; }
.double::before { border: 0; width: 4px; height: 7px; border-top: 2px solid #ddd3da; border-bottom: 2px solid #ddd3da; }
.pdf-label { font: 700 10.500px "Open Sans", sans-serif; fill: #fff; text-anchor: middle; }
.trash { margin: -5px 0 0 -2px; }

/* Browser tabs */
.window { flex: 1; min-width: 0; display: flex; flex-direction: column; }
.tabs { height: 30px; flex: none; display: flex; background: #3c3b37; color: #dfdbd2; border-bottom: 1px solid #262522; }
.scroll-left { width: 20px; margin-right: 13px; display: flex; align-items: center; padding: 1px 0 0 6px; border-right: 1px solid #777570; background: linear-gradient(90deg, #3c3b37, #30302c); box-shadow: 3px 0 3px #262522; }
.tab { position: relative; width: 100px; flex: none; display: flex; align-items: center; padding: 2px 0 0 12px; white-space: nowrap; line-height: 28px; }
.tab::before { content: ""; position: absolute; left: 0; top: 5px; width: 1px; height: 22px; background: #7b7974; }
.tab span { letter-spacing: .35px; }
.fav { width: 16px; height: 16px; margin-right: 4px; }
.ars { width: 16px; height: 16px; margin-right: 4px; border-radius: 50%; background: #ff4e00; color: #fff; font: 600 8px/15px "Open Sans", sans-serif; text-align: center; }
.active { z-index: 1; padding-left: 10px; color: #4b4a47; }
.active::before, .after::before { display: none; }
.active span { position: relative; width: 72px; }
.tab-shape { position: absolute; left: -14px; top: 0; }
.close { position: relative; }
.after { padding-left: 10px; }
.bare { padding-left: 10px; }
.cut { width: 17px; overflow: hidden; }
.tab-tools { flex: 1; display: flex; align-items: center; border-left: 1px solid #8b8984; padding: 1px 0 0 4px; box-shadow: -3px 0 3px #262522; }
.tab-tools .plus { margin: 0 22px 0 18px; }

/* Toolbar */
.toolbar { height: 41px; flex: none; display: flex; align-items: center; padding-left: 4px; background: #f4f2f0; border-bottom: 1px solid #c5c3be; color: #949494; }
.back { position: relative; z-index: 1; width: 32px; height: 32px; border: 1px solid #bdbbb7; border-radius: 50%; background: #f9f8f7; display: flex; align-items: center; justify-content: center; }
.urlbar { width: 648px; height: 24px; margin-left: -5px; border: 1px solid #c3c1bd; border-radius: 2px; background: #fff; display: flex; align-items: center; padding-left: 10px; }
.url { flex: 1; margin-left: 6px; padding-left: 5px; border-left: 1px solid #c9c9c9; line-height: 17px; height: 16px; letter-spacing: .43px; white-space: nowrap; }
.url b { font-weight: 400; color: #222; }
.url-icons { display: flex; gap: 2px; padding-right: 8px; height: 16px; border-right: 1px solid #c9c9c9; }
.reload { margin: 0 11px 0 10px; }
.search { width: 210px; height: 24px; margin: 0 7px; border: 1px solid #c3c1bd; border-radius: 2px; background: #fff; display: flex; align-items: center; gap: 5px; padding-left: 4px; }
.cell { display: flex; align-items: center; justify-content: center; height: 18px; }
.star { width: 31px; border-right: 1px solid #d2d0cc; }
.list { width: 30px; }
.save { width: 31px; margin-left: 8px; padding-left: 1px; border-right: 1px solid #d2d0cc; }
.cross { width: 31px; margin-left: 7px; border-right: 1px solid #d2d0cc; }
.drop { width: 14px; padding-left: 2px; }
.addons { display: flex; margin-left: 3px; }
.addons div { width: 38px; height: 18px; display: flex; align-items: center; justify-content: center; }
.addons .lp { padding: 0 2px 7px 0; }
.k { width: 16px; height: 16px; border-radius: 2px; background: linear-gradient(100deg, #444, #111 50%, #777); color: #ffb400; font-size: 16px; font-weight: 600; line-height: 15px; text-align: center; }
.menu { height: 34px; border-left: 1px solid #dad8d4; padding-left: 13px; display: flex; align-items: center; margin-left: 2px; }

/* Page */
.page { flex: 1; background: #fafafa; color: #333; font-family: "Liberation Sans", Arial, sans-serif; font-size: 14px; line-height: 20px; }
.navbar { height: 54px; background: #fff; border: 1px solid #e7e7e7; border-radius: 4px; display: flex; align-items: center; padding: 0 30px 2px 15px; color: #00548b; }
.brand { flex: 1; font-size: 18px; color: #777; }
.login { margin-right: 30px; letter-spacing: .15px; }
h2 { margin: 40px 0 10px; font-size: 30px; font-weight: 400; line-height: 33px; letter-spacing: .2px; text-align: center; }
.form { display: flex; flex-direction: column; align-items: center; }
.row { display: flex; height: 32px; align-items: center; white-space: nowrap; }
label { font-weight: 700; letter-spacing: .03px; }
.loose { letter-spacing: .13px; }
abbr { font-weight: 700; text-decoration: none; border-bottom: 2px dotted #666; }
.field { width: 199px; height: 31px; margin-bottom: 1px; background: #fff; border: 2px solid #fff; border-top-color: #848484; border-left-color: #848484; display: flex; align-items: center; justify-content: flex-end; padding-right: 5px; }
.focus { width: 198px; height: 30px; margin: 0 0 0 1px; border: 1px solid #e68b67; border-radius: 4px; background: linear-gradient(#f1f1f1, #fff 70%); justify-content: flex-start; padding-left: 6px; }
.caret { width: 1px; height: 16px; background: #111; }
.hint { letter-spacing: .13px; margin-left: 1px; }
button { width: 74px; height: 34px; border: 0; border-radius: 4px; background: #f2f1f0; color: #333; font: inherit; padding: 0; }
.log-in { color: #337ab7; }
```
